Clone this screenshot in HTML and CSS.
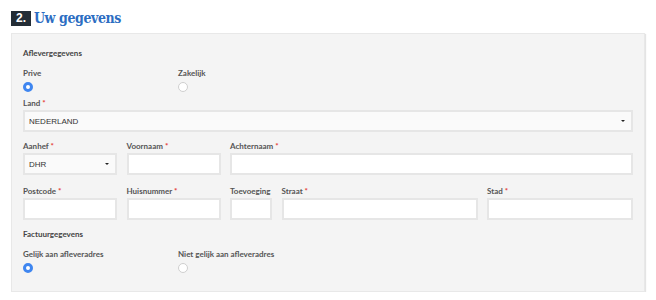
FILE: index.html
```html
<!DOCTYPE html>
<html lang="nl">
<head>
<meta charset="utf-8">
<title>Uw gegevens</title>
<link rel="stylesheet" href="styles.css">
</head>
<body>
<div class="page">
  <h2 class="step-title"><span class="step-num">2.</span><span class="step-text">Uw gegevens</span></h2>
  <div class="panel">
    <div class="section-title">Aflevergegevens</div>
    <div class="radio-row">
      <div class="radio-opt">
        <div class="lbl">Prive</div>
        <span class="radio checked"></span>
      </div>
      <div class="radio-opt">
        <div class="lbl">Zakelijk</div>
        <span class="radio"></span>
      </div>
    </div>
    <div class="field-row row-land">
      <div class="field grow">
        <div class="lbl">Land <span class="req">*</span></div>
        <div class="box select">NEDERLAND<span class="caret"></span></div>
      </div>
    </div>
    <div class="field-row row-name">
      <div class="field w94">
        <div class="lbl">Aanhef <span class="req">*</span></div>
        <div class="box select">DHR<span class="caret"></span></div>
      </div>
      <div class="field w94">
        <div class="lbl">Voornaam <span class="req">*</span></div>
        <div class="box"></div>
      </div>
      <div class="field grow">
        <div class="lbl">Achternaam <span class="req">*</span></div>
        <div class="box"></div>
      </div>
    </div>
    <div class="field-row row-addr">
      <div class="field w94">
        <div class="lbl">Postcode <span class="req">*</span></div>
        <div class="box"></div>
      </div>
      <div class="field w94">
        <div class="lbl">Huisnummer <span class="req">*</span></div>
        <div class="box"></div>
      </div>
      <div class="field w42">
        <div class="lbl">Toevoeging</div>
        <div class="box"></div>
      </div>
      <div class="field w196">
        <div class="lbl">Straat <span class="req">*</span></div>
        <div class="box"></div>
      </div>
      <div class="field grow">
        <div class="lbl">Stad <span class="req">*</span></div>
        <div class="box"></div>
      </div>
    </div>
    <div class="section-title sec2">Factuurgegevens</div>
    <div class="radio-row">
      <div class="radio-opt">
        <div class="lbl">Gelijk aan afleveradres</div>
        <span class="radio checked"></span>
      </div>
      <div class="radio-opt">
        <div class="lbl">Niet gelijk aan afleveradres</div>
        <span class="radio"></span>
      </div>
    </div>
  </div>
</div>
</body>
</html>
```
FILE: styles.css
```css
* { box-sizing: border-box; }
html, body { margin: 0; padding: 0; background: #ffffff; }
.page { padding: 10px 11px 0 11px; width: 656px; }

.step-title {
  margin: 0;
  display: flex;
  align-items: center;
  height: 16px;
  font-weight: normal;
}
.step-num {
  display: inline-flex;
  align-items: center;
  justify-content: center;
  width: 20px;
  height: 15px;
  background: #232d36;
  color: #ffffff;
  font-family: "Liberation Sans", Arial, sans-serif;
  font-weight: 700;
  font-size: 12px;
}
.step-text {
  margin-left: 3px;
  font-family: "DejaVu Serif Condensed", "DejaVu Serif", serif;
  font-stretch: condensed;
  font-weight: 700;
  font-size: 14px;
  letter-spacing: -0.4px;
  color: #2c6dc2;
}

.panel {
  margin-top: 7px;
  width: 634px;
  background: #f4f4f4;
  border: 1px solid #e8e8e8;
  box-shadow: 1px 1px 1px #e4e4e4;
  padding: 13px 11px 18px 11px;
}

.lbl, .section-title {
  font-family: "Lato", "Noto Sans", sans-serif;
  font-weight: 700;
  font-size: 8px;
  line-height: 12px;
  color: #555555;
  white-space: nowrap;
}
.section-title { color: #444; }
.sec2 { margin-top: 8px; }
.req { color: #e53935; }

.radio-row {
  display: grid;
  grid-template-columns: 155px 155px;
  margin-top: 8px;
}
.radio-opt { display: flex; flex-direction: column; align-items: flex-start; }
.radio {
  margin-top: 3px;
  width: 10px;
  height: 10px;
  border-radius: 50%;
  background: #ffffff;
  border: 1px solid #cfcfcf;
}
.radio.checked {
  background: #ffffff;
  border: 3px solid #3f86f0;
}

.field-row { display: flex; gap: 9.5px; }
.row-land { margin-top: 5px; }
.row-name { margin-top: 8px; }
.row-addr { margin-top: 10px; }
.field { display: flex; flex-direction: column; }
.field .lbl { margin-bottom: 1px; }
.w94 { width: 94px; }
.w42 { width: 42px; }
.w196 { width: 196px; }
.grow { flex: 1; }

.box {
  height: 22px;
  background: #ffffff;
  border: 2px solid #e6e6e6;
  font-family: "Liberation Sans", Arial, sans-serif;
  font-size: 8px;
  color: #333333;
  display: flex;
  align-items: center;
  padding: 0 4px;
  position: relative;
}
.box.select { background: #fafafa; }
.caret {
  position: absolute;
  right: 6px;
  top: 8px;
  width: 0;
  height: 0;
  border-left: 2px solid transparent;
  border-right: 2px solid transparent;
  border-top: 2px solid #222;
}
```
